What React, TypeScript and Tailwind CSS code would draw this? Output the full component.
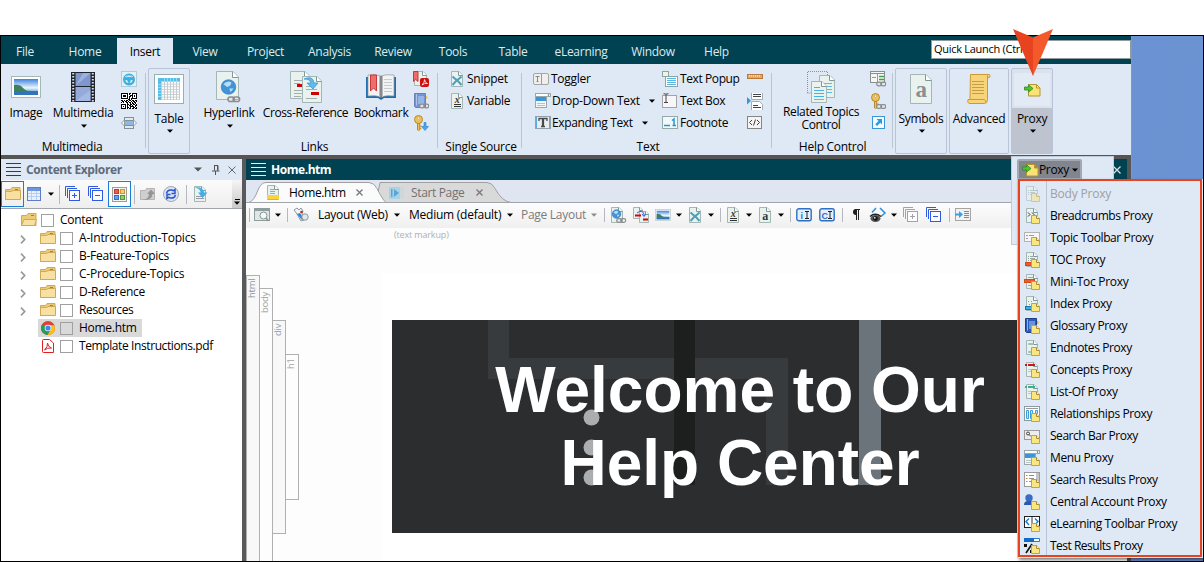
import React from "react";

type Kids = { children?: React.ReactNode };

const Svg = ({ w = 16, h = 16, c = "", vb, children }: Kids & { w?: number; h?: number; c?: string; vb?: string }) => (
  <svg width={w} height={h} viewBox={vb ?? `0 0 ${w} ${h}`} className={`shrink-0 ${c}`} fill="none">
    {children}
  </svg>
);

const Caret = ({ c = "", fill = "#000" }: { c?: string; fill?: string }) => (
  <Svg w={6} h={4} c={c}>
    <path d="M0 0.5h6L3 3.7z" fill={fill} />
  </Svg>
);

const Sep = ({ c = "" }: { c?: string }) => <div className={`shrink-0 w-px bg-[#b9c5d3] ${c}`} />;

const T = ({ children, c = "" }: Kids & { c?: string }) => (
  <span className={`block shrink-0 whitespace-nowrap text-[12px] leading-[16px] ${c}`}>{children}</span>
);

/* ---------- shared drawing parts ---------- */

const Page = ({ x = 0, y = 0, w = 12, h = 15, f = 4 }: { x?: number; y?: number; w?: number; h?: number; f?: number }) => (
  <g transform={`translate(${x} ${y})`}>
    <path d={`M.5 .5H${w - f}L${w - 0.5} ${f}V${h - 0.5}H.5z`} fill="#e9f2ef" stroke="#a3b8b4" />
    <path d={`M${w - f - 0.5} .5V${f + 0.5}H${w - 0.5}`} stroke="#7f9995" fill="#fff" />
  </g>
);

const Note = () => (
  <g>
    <path d="M7.5 7.5h5l3 3v5h-8z" fill="#fae681" stroke="#c2a53c" />
    <path d="M12.5 7.5v3h3" fill="#fff6c4" stroke="#a98d2c" />
  </g>
);

const Chain = ({ x, y }: { x: number; y: number }) => (
  <g transform={`translate(${x} ${y})`} stroke="#8b8d92" strokeWidth="1.2">
    <rect x=".7" y=".7" width="5" height="3.6" rx="1.8" fill="#e4e4e8" />
    <rect x="4.7" y=".7" width="5" height="3.6" rx="1.8" fill="none" />
  </g>
);

const Globe = ({ x, y, r }: { x: number; y: number; r: number }) => (
  <g>
    <circle cx={x} cy={y} r={r} fill="#4394d6" stroke="#2f74b4" strokeWidth=".6" />
    <path
      d={`M${x - r * 0.7} ${y - r * 0.4}q${r * 0.6} ${-r * 0.6} ${r * 1.1} ${-r * 0.2}q${-r * 0.1} ${r * 0.6} ${-r * 0.6} ${r * 0.6}z M${x + r * 0.1} ${y + r * 0.2}h${r * 0.6}l${-r * 0.4} ${r * 0.5}z`}
      fill="#b5defa"
    />
  </g>
);

const Scenery = ({ w, h }: { w: number; h: number }) => (
  <Svg w={w} h={h} vb="0 0 30 22">
    <defs>
      <linearGradient id="sky" x1="0" y1="0" x2="0" y2="1">
        <stop offset="0" stopColor="#3f83dc" />
        <stop offset=".55" stopColor="#eaf6ff" />
        <stop offset="1" stopColor="#2c6fb5" />
      </linearGradient>
    </defs>
    <rect x=".5" y=".5" width="29" height="21" fill="#fff" stroke="#a3bab6" />
    <rect x="3" y="3" width="24" height="16" fill="url(#sky)" />
    <path d="M3 9q6-1 9 3t9 2l-6 1H3z" fill="#3e7f5c" />
    <path d="M3 15h24v4H3z" fill="#2f75b8" />
  </Svg>
);

const KeyShape = () => (
  <g>
    <circle cx="5.5" cy="4.500" r="4" fill="#ecc05c" stroke="#b98a2c" />
    <circle cx="5.5" cy="3.2" r="1.2" fill="#fff6d8" stroke="#b98a2c" strokeWidth=".5" />
    <path d="M4.500 8.500h2.200V15l-1.100.8-1.100-.8z M6.700 11h1.800 M6.700 13.300h1.600" fill="#ecc05c" stroke="#b98a2c" />
  </g>
);

const Arrowlet = () => (
  <path d="M.5 3h4V.8L9 4.500 4.500 8.200V6h-4z" fill="#52c234" stroke="#2c8a1a" strokeWidth=".8" />
);

/* ---------- ribbon icons ---------- */

const FilmIcon = () => (
  <Svg w={24} h={30}>
    <rect width="24" height="30" fill="#20242c" />
    <rect x="4.500" y="1" width="15" height="13" fill="#7f97cf" />
    <rect x="4.500" y="15" width="15" height="14" fill="#93aadb" />
    <path d="M4.500 14L12 1h7.500zM4.500 29L19.500 18v11z" fill="#b3c3e6" opacity=".6" />
    {Array.from({ length: 10 }, (_, i) => (
      <g key={i} fill="#d9dee7">
        <rect x="1.200" y={1 + i * 3} width="2" height="1.500" />
        <rect x="20.800" y={1 + i * 3} width="2" height="1.500" />
      </g>
    ))}
  </Svg>
);

const WheelIcon = () => (
  <Svg>
    <rect x=".5" y=".5" width="15" height="15" fill="#e3f1f6" stroke="#b2ccd4" />
    <circle cx="8" cy="8.500" r="4.800" stroke="#3bb0e0" strokeWidth="2.400" />
    <path d="M3 7q5-2 10 0v2h-3l-1.500 3h-1L6 9H3z" fill="#3bb0e0" />
    <path d="M4 5.500q4-1.500 8 0" stroke="#d6eef8" strokeWidth=".8" />
  </Svg>
);

const QR = [
  "1111111011011111", "1000001010010001", "1011101001110101", "1011101011010101", "1000001010010001", "1111111010111111",
  "0000000110100000", "1101011011011011", "0110110100101101", "1010011011010110", "0000001001011010", "1111101101101101",
  "1000101011010011", "1010101001111010", "1000101101001101", "1111101011011011",
];
const QrIcon = () => (
  <Svg>
    <rect width="16" height="16" fill="#fff" />
    {QR.map((r, y) => r.split("").map((b, x) => (b === "1" ? <rect key={`${x}-${y}`} x={x} y={y} width="1" height="1" fill="#000" /> : null)))}
  </Svg>
);

const SlideIcon = () => (
  <Svg>
    <rect x="3.500" y="2.500" width="9" height="3" fill="#e2eaf0" stroke="#7f9297" />
    <rect x="3.500" y="10.500" width="9" height="3" fill="#e2eaf0" stroke="#7f9297" />
    <rect x="3" y="6" width="10" height="4" fill="#8fb7e6" />
    <path d="M3.500 5L.5 8l3 3z M12.500 5l3 3-3 3z" fill="#fff" stroke="#8aa09f" />
  </Svg>
);

const TableIcon = () => (
  <Svg w={30} h={30}>
    <rect x=".5" y=".5" width="29" height="29" fill="#fff" stroke="#9aafb0" />
    <path d="M4 4h22v22H4z" fill="#c3cccf" />
    <path d="M4 4h22v3H7v19H4z" fill="#4fc0ee" />
    {[0, 1, 2, 3, 4, 5, 6].map((r) =>
      [0, 1, 2, 3, 4, 5].map((k) => <rect key={`${r}-${k}`} x={8 + k * 3} y={8 + r * 2.6} width="2" height="1.700" fill="#fff" />)
    )}
    <path d="M10.500 4v3M13.500 4v3M16.500 4v3M19.500 4v3M22.500 4v3M4 10.500h3M4 13.500h3M4 16.500h3M4 19.500h3M4 22.500h3" stroke="#a8e0f7" strokeWidth=".8" />
  </Svg>
);

const HyperlinkIcon = () => (
  <Svg w={26} h={32}>
    <Page w={23} h={29} f={6} />
    <Globe x={12.5} y={16} r={7.3} />
    <g transform="translate(11 25) scale(1.300)"><Chain x={0} y={0} /></g>
  </Svg>
);

const CrossRefIcon = () => (
  <Svg w={32} h={32}>
    <Page w={20} h={28} f={5} />
    <path d="M4 9.500h9M4 12.500h6M4 19.500h9M4 22.500h9M4 25.500h7" stroke="#a2afae" />
    <rect x="7" y="13" width="9" height="3" fill="#c00" />
    <Page x={12} y={5} w={20} h={27} f={5} />
    <path d="M16 18.500h11M16 27.500h11M16 15.500h5" stroke="#a2afae" />
    <rect x="21" y="21" width="8" height="3" fill="#c00" />
    <path d="M14 8q9-4 10 4h4l-5 6-6-6h4q-1-4-7-4z" fill="#62baea" stroke="#3a92cc" strokeWidth=".7" />
  </Svg>
);

const BookIcon = () => (
  <Svg w={30} h={27}>
    <path d="M0 3h30v21H18l-3 2-3-2H0z" fill="#1f6fb2" />
    <path d="M2 1q8-1 13 1 5-2 13-1v21q-8-1-13 1-5-2-13-1z" fill="#f3f3f3" stroke="#8f9597" strokeWidth=".7" />
    <path d="M13 2h4v21h-4z" fill="#b8babb" />
    <path d="M15 2v21" stroke="#55595c" />
    <path d="M18 5.500h8M18 8.500h8M18 11.500h8M18 14.500h8M18 17.500h8" stroke="#c9cbcc" />
    <path d="M4.500 1h6v16l-3-3-3 3z" fill="#ef6d6d" stroke="#c43a3a" />
  </Svg>
);

const PdfMarkIcon = () => (
  <Svg>
    <Page x={1} w={13} h={15} />
    <path d="M.5.500h4.500v10L2.700 8.500.5 10.500z" fill="#f06a6a" stroke="#c43a3a" />
    <rect x="7" y="7" width="9" height="9" rx="2" fill="#cf1010" />
    <path d="M9 14q3-3 2.500-5.500Q12 12 14.500 12.500 11.500 12 9 14z" stroke="#fff" strokeWidth=".8" />
  </Svg>
);

const BlueBook = ({ faded = false }: { faded?: boolean }) => (
  <g opacity={faded ? 0.6 : 1}>
    <path d="M1.500.500h11v14h-10l-1-1z" fill="#2b5db8" stroke="#1c3f86" />
    <path d="M3.500 1v11.500" stroke="#8fb0e8" />
    <rect x="5" y="3" width="6" height="8" fill="#6a93dd" />
    <path d="M13 3h1.500v3H13z" fill="#f0b429" />
  </g>
);

const SnippetShape = () => (
  <g>
    <Page w={12} h={16} />
    <path d="M1.500 5.500L6 9.500 10.500 5.500M1.500 14L6 9l4.500 5" stroke="#4f9fb6" strokeWidth="2" />
  </g>
);

const PageGlyph = ({ g, italic, lines }: { g: string; italic?: boolean; lines?: boolean }) => (
  <Svg w={13} h={16}>
    <Page w={12} h={16} />
    <text x="6" y={lines ? 10 : 12.5} textAnchor="middle" fontFamily="Liberation Serif" fontWeight="bold" fontStyle={italic ? "italic" : "normal"} fontSize={lines ? 10 : 12} fill="#333">
      {g}
    </text>
    {lines && <path d="M3 11.500h7M3 13.500h7" stroke="#333" />}
  </Svg>
);

const TogglerIcon = () => (
  <Svg w={16} h={13}>
    <rect x=".5" y=".5" width="15" height="11" rx="1.500" fill="#f1eeee" stroke="#a5a5a5" />
    <path d="M8.500 1v10.500" stroke="#9b9b9b" />
    <path d="M2.500 3.500h4M4.500 3.500v5M3.500 8.500h2" stroke="#888" />
  </Svg>
);

const MenuBoxShape = () => (
  <g>
    <rect x=".5" y=".5" width="15" height="3" fill="#fff" stroke="#9aa7ad" />
    <rect x=".5" y="3.500" width="11" height="11" fill="#f3f6f6" stroke="#9aa7ad" />
    <rect x="1" y="4" width="10" height="4" fill="#3b96d8" />
    <path d="M2 10.500h8M2 12.500h8" stroke="#b9c3c3" />
    <path d="M12.500 1.500h2l-1 1.500z" fill="#444" />
  </g>
);

const ExpandIcon = () => (
  <Svg w={16} h={14}>
    <rect x=".5" y=".5" width="15" height="12" fill="#e8edf2" stroke="#8ea3ad" />
    <path d="M1.500 1v11M14.500 1v11" stroke="#5aa9e0" />
    <path d="M4 5V2.500h8V5M6 10.500h4" stroke="#4a4a4a" strokeWidth="1.300" />
    <path d="M8 2.500v8" stroke="#4a4a4a" strokeWidth="2.200" />
  </Svg>
);

const TextPopupIcon = () => (
  <Svg>
    <rect x=".5" y=".5" width="6" height="5" fill="#eef3f2" stroke="#8da6a2" />
    <rect x="3.500" y="5.500" width="12" height="10" fill="#fff" stroke="#8da6a2" />
    <path d="M5 7.500h9M5 9.500h9M5 11.500h9M5 13.500h9" stroke="#5bb8e4" />
  </Svg>
);

const TextBoxIcon = () => (
  <Svg>
    <rect x=".5" y="2.500" width="14" height="12" fill="#f7f6f8" stroke="#a3a3a8" />
    <path d="M1.500.800Q3.500.5 4 1.500 4.500.5 6.500.800M4 1.500V9M2 9.500h4" stroke="#444" />
  </Svg>
);

const FootnoteIcon = () => (
  <Svg w={16} h={14}>
    <rect x=".5" y=".5" width="15" height="12" fill="#f2f7f9" stroke="#93aaa6" />
    <path d="M2 9.500h6M10 4.500l2-1.500v7M10.500 9.500h3.500" stroke="#2196d8" strokeWidth="1.500" />
  </Svg>
);

const RulerIcon = () => (
  <Svg w={16} h={5}>
    <rect x=".5" y=".5" width="15" height="4" fill="#e8a860" stroke="#b87a3a" />
    <path d="M2.500 1v1.500M4.500 1v1.500M6.500 1v1.500M8.500 1v1.500M10.500 1v1.500M12.500 1v1.500" stroke="#fbe0bd" />
  </Svg>
);

const BreakIcon = () => (
  <Svg w={17} h={17}>
    <path d="M4.500 0V6.500h11V0M4.500 17V8.500h8l3 3v5.500" fill="#fff" stroke="#9fb0ad" />
    <path d="M6 1.500h8M6 3.500h8M6 12.500h5M6 14.500h8" stroke="#444" />
    <path d="M0 4l4 3.800-4 3.800z" fill="#3b96d8" />
  </Svg>
);

const CodeIcon = () => (
  <Svg>
    <rect x=".5" y="1.500" width="14" height="12" fill="#f4f4f4" stroke="#858585" />
    <path d="M5 5L2.500 7.500 5 10M10 5l2.500 2.500L10 10M8.500 4.500l-2 6" stroke="#444" />
  </Svg>
);

const TopicsIcon = () => (
  <Svg w={29} h={33}>
    <path d="M.5 22V.5h20V4M.5 22H4" stroke="#7f9693" strokeDasharray="1 1" />
    <Page x={12} y={4} w={16} h={23} f={5} />
    <path d="M15 12.500h10M15 15.500h10M15 18.500h10M15 21.500h10" stroke="#5bbce8" />
    <Page x={4} y={10} w={16} h={22} f={5} />
    <path d="M7 16.500h6M7 19.500h10M7 22.500h10M7 25.500h10" stroke="#41b3e5" />
    <path d="M7 28.500h10" stroke="#9aa9a7" />
  </Svg>
);

const ControlLinkIcon = () => (
  <Svg>
    <rect x=".5" y=".5" width="14" height="11" fill="#f5f7f5" stroke="#87908f" />
    <path d="M1 2.500h13" stroke="#87908f" />
    <path d="M2 6.500h4M7.500 3v8" stroke="#999" />
    <path d="M9 5.500h5M9 8.500h5" stroke="#39a34a" strokeWidth="1.500" />
    <Chain x={6} y={10.5} />
  </Svg>
);

const ShortcutIcon = () => (
  <Svg w={14} h={14}>
    <rect x=".5" y=".5" width="12" height="12" fill="#f4fafe" stroke="#3b96d8" />
    <path d="M4.500 3h5.500v5.500L8.300 6.700 5 10 3.300 8.300 6.500 4.900z" fill="#2b9be0" />
  </Svg>
);

const SymbolIcon = () => (
  <Svg w={22} h={30}>
    <Page w={22} h={30} f={6} />
    <text x="11" y="23" textAnchor="middle" fontFamily="Liberation Serif" fontWeight="bold" fontSize="23" fill="#8a8f90">a</text>
  </Svg>
);

const ScrollIcon = () => (
  <Svg w={24} h={30}>
    <path d="M3.500.500h19q1 1 0 3h-2v22q0 4-3 4H2q-2-1-1-4h2z" fill="#f7d478" stroke="#cb9a35" />
    <path d="M20.500 4V1.500M3 25.500h14.500q1 0 1 3" stroke="#cb9a35" />
    <path d="M5 7.500h12M5 10.500h12M5 13.500h12M5 16.500h12M5 19.500h12" stroke="#c49c4c" />
  </Svg>
);

const ProxyIcon = ({ c = "" }: { c?: string }) => (
  <Svg w={17} h={14} c={c}>
    <path d="M4.500 2.500v-1h8l3.500 3.500v8h-11.500z M12.500 1.500V5H16" fill="#fbe276" stroke="#b5962f" />
    <g transform="translate(0 1)"><Arrowlet /></g>
  </Svg>
);

/* ---------- menu icons ---------- */

const dots = (
  <path d="M4 4.500h1M6 4.500h3M4 6.500h1M6 6.500h5M4 8.500h1M6 8.500h3" stroke="#9aa9a7" />
);
const MENU: { label: string; t: string; off?: boolean; art: React.ReactNode }[] = [
  { label: "Body Proxy", t: "tracking-[-0.2px]", off: true, art: <><Page x={2} w={12} />{dots}</> },
  { label: "Breadcrumbs Proxy", t: "tracking-[-0.47px]", art: <><Page x={2} w={12} /><path d="M4 4.500l2 2-2 2M8 4.500l2 2-2 2" stroke="#333" /></> },
  { label: "Topic Toolbar Proxy", t: "tracking-[-0.4px]", art: <><rect x=".5" y="2.500" width="15" height="9" fill="#f6f6f8" stroke="#b3b3b8" /><path d="M2 5.500h2M5 5.500h5M2 8.500h2" stroke="#9b9ba0" /></> },
  { label: "TOC Proxy", t: "tracking-[-0.35px]", art: <><Page x={2} w={12} />{dots}<rect x="1.500" y="10.500" width="6" height="3" fill="#f05a28" stroke="#d9480f" /></> },
  { label: "Mini-Toc Proxy", t: "tracking-[-0.28px]", art: <><Page x={2} w={12} /><path d="M4 3.500h5M4 11.500h3" stroke="#9aa9a7" /><rect x=".5" y="5.500" width="10" height="3" fill="#f05a28" stroke="#d9480f" /></> },
  { label: "Index Proxy", t: "tracking-[-0.38px]", art: <><Page x={2} w={12} /><path d="M4 5.500h1M7 5.500h1M5 8.500h1M8 8.500h1" stroke="#8b9a9a" /><rect x="1.500" y="10.500" width="6" height="3" fill="#39b2e8" stroke="#1876ad" /></> },
  { label: "Glossary Proxy", t: "tracking-[-0.4px]", art: <BlueBook /> },
  { label: "Endnotes Proxy", t: "tracking-[-0.4px]", art: <><Page x={2} w={12} /><path d="M4.500 3.500h5v1h-5zM4.500 11.500h3v1h-3z" stroke="#9fc0b6" /></> },
  { label: "Concepts Proxy", t: "tracking-[-0.35px]", art: <><Page x={2} w={12} /><path d="M1 3h2M4 3h7" stroke="#c8171e" strokeWidth="2" /><path d="M4 7.500h5M4 9.500h3" stroke="#b9c6c3" /></> },
  { label: "List-Of Proxy", t: "tracking-[-0.28px]", art: <><Page x={2} w={12} /><path d="M1 3h2M4 3h7" stroke="#39b08a" strokeWidth="2" /><path d="M4 7.500h5M4 9.500h3" stroke="#b9c6c3" /></> },
  { label: "Relationships Proxy", t: "tracking-[-0.4px]", art: <><rect x=".5" y=".5" width="15" height="14" fill="#fff" stroke="#8b9aa0" /><path d="M2 2.500h12" stroke="#999" /><path d="M2.500 4.500h2v8h-2zM6.500 4.500h2v8h-2zM11.500 4.500h2v3h-2z" stroke="#3a9cd8" fill="#c9e8f8" /></> },
  { label: "Search Bar Proxy", t: "tracking-[-0.46px]", art: <><rect x=".5" y="2.500" width="15" height="9" fill="#ecebee" stroke="#99999e" /><circle cx="4" cy="5.500" r="1.500" stroke="#444" /><path d="M5 6.500l2 2" stroke="#444" /></> },
  { label: "Menu Proxy", t: "tracking-[-0.38px]", art: <MenuBoxShape /> },
  { label: "Search Results Proxy", t: "tracking-[-0.42px]", art: <><rect x=".5" y=".5" width="15" height="14" fill="#fff" stroke="#99999e" /><path d="M12 1h3v13h-3z" fill="#c4c4c8" /><path d="M2 3.500h1.500M2 6.500h1.500M2 9.500h1.500" stroke="#d07a2a" /><path d="M5 3.500h5M5 6.500h5M5 9.500h3" stroke="#8d8d8d" /></> },
  { label: "Central Account Proxy", t: "tracking-[-0.33px]", art: <><circle cx="5" cy="4" r="3.700" fill="#3a6cc6" /><path d="M0 11q0-4 4-4h3q3 0 3.500 4z" fill="#2b58b0" /></> },
  { label: "eLearning Toolbar Proxy", t: "tracking-[-0.41px]", art: <><rect x=".5" y=".5" width="15" height="11" fill="#fff" stroke="#222" /><path d="M5 2.500L2 5.500l3 3.500M11 2.500l3 3-3 3" stroke="#1f7fd0" strokeWidth="1.500" /><path d="M8 1v10" stroke="#333" /></> },
  { label: "Test Results Proxy", t: "tracking-[-0.5px]", art: <><path d="M.5.500h15v3H.5z" stroke="#1f7fd0" fill="#fff" /><path d="M0 0h10v4H0z" fill="#1569c7" /><path d="M8 6L2 15" stroke="#111" strokeWidth="1.600" /><path d="M0 6h3v3H0zM6 12h2v3H6z" fill="#111" /></> },
];

/* ---------- ribbon ---------- */

const TABS: [string, string][] = [
  ["File", "w-[48px]"], ["Home", "w-[68px] pl-[4px]"], ["Insert", "w-[56px]"], ["View", "w-[64px]"], ["Project", "w-[57px]"],
  ["Analysis", "w-[71px]"], ["Review", "w-[56px]"], ["Tools", "w-[64px]"], ["Table", "w-[56px]"], ["eLearning", "w-[80px]"],
  ["Window", "w-[64px]"], ["Help", "w-[63px]"],
];

const Big = ({ icon, label, caret, w }: { icon: React.ReactNode; label: React.ReactNode; caret?: boolean; w: string }) => (
  <div className={`flex shrink-0 flex-col items-center ${w}`}>
    <div className="flex h-[34px] items-center">{icon}</div>
    <T c="leading-[14px] text-center pt-[1px]">{label}</T>
    {caret && <Caret c="mt-[3px] ml-[2px]" />}
  </div>
);

const Small = ({ children, c = "" }: Kids & { c?: string }) => (
  <div className={`flex shrink-0 flex-col ${c}`}>
    {React.Children.map(children, (k) => (
      <div className="flex h-[22px] items-center">{k}</div>
    ))}
  </div>
);

const Group = ({ w, label, children, pl = "", shift = "" }: Kids & { w: string; label: string; pl?: string; shift?: string }) => (
  <div className={`flex h-[91px] shrink-0 flex-col ${w}`}>
    <div className={`flex h-[75px] pt-[6px] ${pl}`}>{children}</div>
    <div className={`flex justify-center ${shift}`}><T>{label}</T></div>
  </div>
);

const Boxed = ({ w, icon, label, hot }: { w: string; icon: React.ReactNode; label: string; hot?: boolean }) => (
  <div className={`mt-[4px] flex h-[86px] shrink-0 flex-col items-center rounded-[2px] border border-[#b9c4d6] pt-[4px] ${w} ${hot ? "bg-[linear-gradient(#dbe2ec_39px,#bdc3cf_39px)]" : ""}`}>
    <div className={`flex h-[33px] items-center justify-center ${hot ? "w-[36px] bg-[#e2eaf5]" : "pb-[2px]"}`}>{icon}</div>
    <T c="mt-[5px]">{label}</T>
    <Caret c="mt-[2px] ml-[2px]" />
  </div>
);

const Ribbon = () => (
  <div className="flex h-[91px] bg-[#dfe8f5]">
    <Group w="w-[144px]" label="Multimedia" shift="pr-[2px]">
      <Big w="w-[50px]" icon={<Scenery w={30} h={22} />} label="Image" />
      <Big w="w-[64px]" icon={<FilmIcon />} label="Multimedia" caret />
      <Small c="ml-[6px] -mt-[2px]"><WheelIcon /><QrIcon /><SlideIcon /></Small>
    </Group>
    <Sep c="mt-[9px] h-[75px]" />
    <Boxed w="w-[42px] ml-[2px]" icon={<TableIcon />} label="Table" />
    <Group w="w-[247px]" label="Links" pl="pl-[1px]" shift="pl-[2px]">
      <Big w="w-[76px]" icon={<HyperlinkIcon />} label="Hyperlink" caret />
      <Big w="w-[77px]" icon={<CrossRefIcon />} label={<span className="tracking-[-0.4px]">Cross-Reference</span>} />
      <Big w="w-[74px]" icon={<BookIcon />} label={<span className="tracking-[-0.35px]">Bookmark</span>} />
      <Small c="-mt-[2px] ml-[-5px]">
        <PdfMarkIcon />
        <Svg><BlueBook faded /><Chain x={6} y={10.5} /></Svg>
        <Svg><KeyShape /><path d="M11 7.500h2v4h2.500L12 15.500 8.500 11.500H11z" fill="#4aa6ee" stroke="#2b7fc8" strokeWidth=".6" /></Svg>
      </Small>
    </Group>
    <Sep c="mt-[9px] h-[75px]" />
    <Group w="w-[83px]" pl="pl-[13px]" label="Single Source" shift="pl-[3px]">
      <Small c="-mt-[2px]">
        <><Svg w={13}><SnippetShape /></Svg><T c="ml-[3px]">Snippet</T></>
        <><PageGlyph g="x" italic lines /><T c="ml-[3px]">Variable</T></>
      </Small>
    </Group>
    <Sep c="mt-[9px] h-[75px]" />
    <Group w="w-[249px]" pl="pl-[11px]" label="Text" shift="pl-[3px]">
      <Small c="-mt-[2px] w-[129px]">
        <><TogglerIcon /><T c="ml-[2px]">Toggler</T></>
        <><Svg c="ml-[2px]"><MenuBoxShape /></Svg><T c="ml-[1px] w-[97px]">Drop-Down Text</T><Caret /></>
        <><div className="ml-[2px]"><ExpandIcon /></div><T c="ml-[1px] w-[90px] tracking-[-0.35px]">Expanding Text</T><Caret /></>
      </Small>
      <Small c="-mt-[2px] w-[85px]">
        <><TextPopupIcon /><T c="ml-[2px] tracking-[-0.4px]">Text Popup</T></>
        <><TextBoxIcon /><T c="ml-[2px] tracking-[-0.4px]">Text Box</T></>
        <><FootnoteIcon /><T c="ml-[2px]">Footnote</T></>
      </Small>
      <Small c="-mt-[2px]"><div className="pb-[6px]"><RulerIcon /></div><BreakIcon /><CodeIcon /></Small>
    </Group>
    <Sep c="mt-[9px] h-[75px]" />
    <Group w="w-[120px]" label="Help Control" shift="pl-[1px]">
      <Big w="w-[98px]" icon={<TopicsIcon />} label={<span className="block leading-[13px] tracking-[-0.35px]">Related Topics<br />Control</span>} />
      <Small c="-mt-[2px]">
        <ControlLinkIcon />
        <Svg><KeyShape /><Chain x={6} y={11} /></Svg>
        <div className="pl-[2px]"><ShortcutIcon /></div>
      </Small>
    </Group>
    <Sep c="mt-[9px] h-[75px]" />
    <Boxed w="w-[52px] ml-[2px]" icon={<SymbolIcon />} label="Symbols" />
    <Boxed w="w-[60px] ml-[2px]" icon={<ScrollIcon />} label="Advanced" />
    <Boxed w="w-[42px] ml-[2px]" icon={<ProxyIcon />} label="Proxy" hot />
  </div>
);

/* ---------- content explorer ---------- */

const Lines = ({ stroke }: { stroke: string }) => (
  <Svg w={15} h={14}>
    <path d="M0 .5h15M0 4.500h15M0 8.500h15M0 12.500h15" stroke={stroke} />
  </Svg>
);

const Folder = ({ open }: { open?: boolean }) => (
  <Svg w={16} h={14}>
    <path d="M.5 12.500v-10h5l1.500-2h8v12z" fill="#ecca78" stroke="#cfa858" />
    <path d="M10 2.500h3" stroke="#3b96d8" />
    <path d={open ? "M.5 12.500L3 6.500h12.500l-2 6z" : "M.5 12.500v-8h6l1.500-1h7.500v9z"} fill="#f7e0a0" stroke="#cfa858" />
  </Svg>
);

const Stack = ({ sign, color }: { sign: "+" | "-"; color: string }) => (
  <Svg>
    <path d="M.5 10V.5H10M2.500 12V2.500H12" stroke={color} />
    <rect x="4.500" y="4.500" width="10" height="10" stroke={color} fill="#fafcff" />
    <path d={sign === "+" ? "M7 9.500h5M9.500 7v5" : "M7 9.500h5"} stroke={color} />
  </Svg>
);

const Box = () => <div className="h-[13px] w-[13px] shrink-0 border border-[#a0a0a0]" />;

const Chrome = () => (
  <Svg w={14} h={14}>
    <circle cx="7" cy="7" r="7" fill="#dd4433" />
    <path d="M7 7L1 3.400A7 7 0 0 0 6.500 14l3-5z" fill="#22a05a" />
    <path d="M7 7l2.700 1.800L6.600 14A7 7 0 0 0 13.300 4.200H8z" fill="#fbc116" />
    <circle cx="7" cy="7" r="3.300" fill="#fff" />
    <circle cx="7" cy="7" r="2.600" fill="#4286f5" />
  </Svg>
);

const FOLDERS: [string, string][] = [
  ["A-Introduction-Topics", "tracking-[-0.17px]"], ["B-Feature-Topics", "tracking-[-0.25px]"], ["C-Procedure-Topics", "tracking-[-0.22px]"],
  ["D-Reference", "tracking-[-0.28px]"], ["Resources", "tracking-[-0.35px]"],
];

const Explorer = () => (
  <div className="flex w-[241px] shrink-0 flex-col bg-white">
    <div className="flex h-[21px] items-center bg-[#dfe8f5] pl-[5px]">
      <Lines stroke="#3c3c3c" />
      <T c="ml-[5px] w-[168px] font-bold text-[#5f6b79] tracking-[-0.38px]">Content Explorer</T>
      <Svg w={8} h={5}><path d="M0 .5h8L4 4.500z" fill="#555" /></Svg>
      <Svg w={8} h={10} c="ml-[10px]"><path d="M2 .5h4v5M2.500 .5v5M0 6h7.500M3.500 6v4M5.500 .5v5" stroke="#555" /></Svg>
      <Svg w={8} h={8} c="ml-[8px]"><path d="M.5.500l7 7m0-7l-7 7" stroke="#666" /></Svg>
    </div>
    <div className="flex h-[29px] items-center border-b border-[#a0a5ab] bg-[linear-gradient(#fbfbfb,#eeeeee)]">
      <div className="flex h-[26px] w-[23px] items-center justify-center border border-[#1a7fd4]"><Folder /></div>
      <Svg w={14} h={14} c="ml-[3px]">
        <rect x=".5" y=".5" width="13" height="13" fill="#e9f1fd" stroke="#5d7dc8" />
        <rect x="1" y="1" width="12" height="3" fill="#6f95e0" />
        <path d="M1 6.500h12M1 9.500h12M4.500 4v9M9.500 4v9" stroke="#b9cdf0" />
      </Svg>
      <Caret c="ml-[7px]" />
      <div className="ml-[5px] h-[19px] w-px bg-[#b5b9be]" />
      <div className="ml-[5px]"><Stack sign="+" color="#2f5be0" /></div>
      <div className="ml-[7px]"><Stack sign="-" color="#2f5be0" /></div>
      <div className="ml-[4px] flex h-[26px] w-[23px] items-center justify-center border border-[#1a7fd4] bg-[#fdfdfd]">
        <Svg w={15} h={15}>
          <rect x=".5" y=".5" width="14" height="14" fill="#f3f3f3" stroke="#9d9d9d" />
          <rect x="2.500" y="2.500" width="4" height="4" fill="#e8604f" stroke="#c43a2b" />
          <rect x="8.500" y="2.500" width="4" height="4" fill="#f7cf6a" stroke="#d0972b" />
          <rect x="2.500" y="8.500" width="4" height="4" fill="#6f9fe6" stroke="#3a6cc6" />
          <rect x="8.500" y="8.500" width="4" height="4" fill="#8fd066" stroke="#559c30" />
        </Svg>
      </div>
      <div className="ml-[3px] h-[19px] w-px bg-[#b5b9be]" />
      <Svg w={16} h={14} c="ml-[5px]">
        <path d="M.5 12.500v-9h5l1-2h8v11z" fill="#cfcfcf" stroke="#b5b5b5" />
        <path d="M3 13q6-1 6-6H7l4-4.500L15 7h-2.500q0 6-9.500 6z" fill="#959595" />
      </Svg>
      <Svg c="ml-[7px]">
        <circle cx="8" cy="8" r="7.500" fill="#dbe4f7" stroke="#a0a6b3" />
        <path d="M3.500 7.500q1-4 5-3.500l2 .7 1.500-1.200v4H8.500M12.500 9q-1 3.500-5 3l-2-.6L4 12.500v-4h3.500" stroke="#2b55c8" strokeWidth="1.500" />
      </Svg>
      <div className="ml-[7px] h-[19px] w-px bg-[#b5b9be]" />
      <Svg c="ml-[6px]">
        <Page x={1} y={0} w={12} h={16} />
        <path d="M3 10.500h8M3 12.500h8" stroke="#99a" />
        <path d="M1.500 1.500q9-1 9.500 5h3.500l-5 5.500L5 6.500h2.500q0-4-6-5z" fill="#45aee8" />
      </Svg>
      <div className="ml-auto flex h-[28px] w-[10px] flex-col items-center justify-end bg-[linear-gradient(#f5f5f5,#c9c9c9)] pb-[3px]">
        <div className="mb-[1px] h-px w-[5px] bg-black" />
        <Caret />
      </div>
    </div>
    <div className="pt-[2px]">
      <div className="flex h-[18px] items-center pl-[20px]"><Folder open /><div className="ml-[4px]"><Box /></div><T c="ml-[6px]">Content</T></div>
      {FOLDERS.map(([n, t]) => (
        <div key={n} className="flex h-[18px] items-center pl-[19px]">
          <Svg w={6} h={9} c="mt-[2px]"><path d="M1 .7l3.700 3.800L1 8.300" stroke="#9a9a9a" strokeWidth="1.700" /></Svg>
          <div className="ml-[14px]"><Folder /></div>
          <div className="ml-[4px]"><Box /></div>
          <T c={`ml-[6px] ${t}`}>{n}</T>
        </div>
      ))}
      <div className="ml-[37px] flex h-[18px] w-[104px] items-center bg-[#d9d9d9] pl-[3px]">
        <Chrome /><div className="ml-[5px]"><Box /></div><T c="ml-[6px]">Home.htm</T>
      </div>
      <div className="flex h-[18px] items-center pl-[41px]">
        <Svg w={12} h={14}>
          <path d="M1.500.500h6l4 3.500v9.500h-10q-1 0-1-1v-11q0-1 1-1z" fill="#fff" stroke="#e02020" />
          <path d="M2.500 11q3.500-3 3-7 .5 4 4 5-4-.5-7 2z" stroke="#e02020" />
        </Svg>
        <div className="ml-[6px]"><Box /></div><T c="ml-[6px] tracking-[-0.4px]">Template Instructions.pdf</T>
      </div>
    </div>
  </div>
);

/* ---------- document ---------- */

const TSep = ({ c = "" }: { c?: string }) => <div className={`h-[14px] w-px shrink-0 bg-[#b5b9be] ${c}`} />;

const DocToolbar = () => (
  <div className="flex h-[25px] shrink-0 items-center overflow-hidden bg-[linear-gradient(#fcfcfc,#f0f0f0)] pb-[2px] pl-[3px]">
    <TSep />
    <Svg w={16} c="ml-[4px]">
      <rect x=".5" y="1.500" width="15" height="12" fill="#dfe6e6" stroke="#8d9c9c" />
      <rect x="1" y="2" width="14" height="2" fill="#8d9c9c" />
      <circle cx="9.500" cy="8.500" r="3.500" fill="#f4f7f7" stroke="#8a9494" />
      <path d="M12 11l2.500 3" stroke="#8a9494" strokeWidth="1.500" />
    </Svg>
    <Caret c="ml-[5px]" />
    <TSep c="ml-[6px]" />
    <Svg w={16} c="ml-[5px]">
      <path d="M1 3l3-2 2 2 2-2 2 3-1 3 2 6-3 1L4 7z" fill="#f3f5f7" stroke="#8a98a3" />
      <path d="M4 7l5 6 2-1-4-6z" fill="#2f86d0" />
      <circle cx="8.500" cy="5" r="1.300" fill="#d82020" />
      <circle cx="12" cy="10" r="3.200" fill="#dfe8ec" stroke="#8a98a3" />
    </Svg>
    <T c="ml-[9px] w-[76px]">Layout (Web)</T><Caret />
    <T c="ml-[9px] w-[98px] tracking-[-0.24px]">Medium (default)</T><Caret />
    <T c="ml-[8px] w-[70px] text-[#7c7c7c]">Page Layout</T><Caret fill="#8c8c8c" />
    <TSep c="ml-[7px]" />
    <Svg w={16} c="ml-[6px]"><Page w={12} h={16} /><Globe x={5.5} y={7} r={4.3} /><Chain x={5} y={11} /></Svg>
    <Svg w={17} c="ml-[6px]">
      <Page w={10} h={12} f={3} /><Page x={6} y={4} w={10} h={12} f={3} />
      <path d="M2 8.500h6M10 12.500h5" stroke="#d00" strokeWidth="2" /><path d="M4 6q5-4 7 1v2m-2-2l2 2.500 2-2.500" stroke="#2f5be0" />
    </Svg>
    <div className="ml-[5px]"><Scenery w={16} h={12} /></div><Caret c="ml-[5px]" />
    <Svg w={13} c="ml-[7px]"><SnippetShape /></Svg><Caret c="ml-[6px]" />
    <TSep c="ml-[6px]" />
    <div className="ml-[6px]"><PageGlyph g="x" italic lines /></div><Caret c="ml-[6px]" />
    <div className="ml-[7px]"><PageGlyph g="a" /></div><Caret c="ml-[6px]" />
    <TSep c="ml-[6px]" />
    {["i", "C"].map((g, i) => (
      <Svg key={g} w={16} h={14} c={i ? "ml-[7px]" : "ml-[5px]"}>
        <rect x=".8" y=".8" width="14.400" height="12" rx="2" fill="#e4effc" stroke="#2f6fc4" strokeWidth="1.400" />
        <text x="5.500" y="10.500" textAnchor="middle" fontFamily="Liberation Sans" fontWeight="bold" fontSize="9" fill="#2f6fc4">{g}</text>
        <path d="M9 3.500h4M11 3.500v7M9 10.500h4" stroke="#222" />
      </Svg>
    ))}
    <TSep c="ml-[7px]" />
    <Svg w={9} h={11} c="ml-[8px]"><path d="M9 .5H4M5.500 1v10M7.500 1v10" stroke="#222" /><path d="M5 0a3 3 0 0 0 0 6z" fill="#222" /></Svg>
    <Svg w={18} c="ml-[9px]">
      <path d="M7 1L3 5.500M11 1l5 5-4 3.500" stroke="#2b8fe0" strokeWidth="1.500" />
      <path d="M1 9.500q5-4.500 11 0" stroke="#222" strokeWidth="1.500" />
      <ellipse cx="6.500" cy="11.500" rx="5" ry="3.500" fill="#555" /><circle cx="6.500" cy="11.500" r="2.300" fill="#111" /><circle cx="5.800" cy="10.800" r=".9" fill="#eee" />
    </Svg>
    <Caret c="ml-[4px]" />
    <div className="ml-[6px]"><Stack sign="+" color="#a3a3a3" /></div>
    <div className="ml-[7px]"><Stack sign="-" color="#2f5be0" /></div>
    <TSep c="ml-[7px]" />
    <Svg w={16} h={13} c="ml-[5px]">
      <rect x=".5" y=".5" width="15" height="12" fill="#f2f2f2" stroke="#a5a5a5" />
      <path d="M9 3.500h5M9 5.500h5M9 7.500h5M9 9.500h5" stroke="#888" /><path d="M0 5.500h4V3l4 3.500L4 10V7.500H0z" fill="#3b9fe0" />
    </Svg>
  </div>
);

const TAGS: [string, string, string][] = [
  ["html", "mt-[47px] h-[300px] w-[14px]", "bg-[#f8f8f8] text-[#8d97a5]"],
  ["body", "mt-[60px] h-[300px] w-[13px]", "text-[#a5a5a5]"],
  ["div", "mt-[92px] h-[214px] w-[13px]", "bg-[#f8f8f8] text-[#8fa3bd]"],
  ["h1", "mt-[126px] h-[146px] w-[13px]", "text-[#a5a5a5]"],
];

const Document = () => (
  <div className="flex w-[881px] shrink-0 flex-col">
    <div className="flex h-[21px] shrink-0 items-center bg-[#004251] pl-[5px]">
      <Lines stroke="#e6eef0" />
      <T c="ml-[5px] font-bold text-white tracking-[-0.45px]">Home.htm</T>
      <Svg w={8} h={8} c="ml-auto mr-[6px]"><path d="M.5.500l7 7m0-7l-7 7" stroke="#d7e2e5" strokeWidth="1.300" /></Svg>
    </div>
    <div className="grid h-[23px] shrink-0 overflow-hidden border-b border-[#a0a5ab] bg-[#dfe6f1]">
      <svg width="270" height="23" className="col-start-1 row-start-1" fill="none">
        <path d="M134 2.500h107q5 0 8 6 7 13 16 14H138l-6-10z" fill="#d9d9d9" stroke="#a0a0a0" />
        <path d="M0 22.500h3Q8 21 12 10q3-7.500 8-7.500h103q5 0 8 6 6 12 9 14z" fill="#fbfbfb" stroke="#a0a0a0" />
        <path d="M4 22.500h134" stroke="#fbfbfb" />
      </svg>
      <div className="col-start-1 row-start-1 flex items-center pl-[21px] pt-[2px]">
        <Svg w={13}><Page w={12} h={15} /><path d="M3 4.500h4M3 6.500h5M3 8.500h5" stroke="#9aa" /><rect x="0" y="10" width="12" height="4" fill="#fbd33a" /></Svg>
        <T c="ml-[9px] w-[67px] tracking-[-0.4px]">Home.htm</T>
        <Svg w={7} h={7}><path d="M.5.500l6 6m0-6l-6 6" stroke="#777" strokeWidth="1.300" /></Svg>
        <Svg w={15} h={12} c="ml-[26px]"><rect width="15" height="12" fill="#a9d2e8" /><path d="M2 2h1.500v8H2zM5 2l5 4-5 4z" fill="#5ba6d0" /><rect x="11" width="4" height="12" fill="#cdd8dd" /></Svg>
        <T c="ml-[7px] w-[65px] text-[#717171] tracking-[-0.35px]">Start Page</T>
        <Svg w={7} h={7}><path d="M.5.500l6 6m0-6l-6 6" stroke="#777" strokeWidth="1.300" /></Svg>
      </div>
    </div>
    <DocToolbar />
    <div className="grid min-h-0 grow overflow-hidden bg-[#fdfdfd]">
      <div className="col-start-1 row-start-1 flex h-[333px] items-start overflow-hidden">
        {TAGS.map(([n, pos, c]) => (
          <div key={n} className={`shrink-0 border border-l-0 border-[#b0b0b0] first:border-l ${pos} ${c}`}>
            <span className="block h-full w-[9px] rotate-180 pb-[3px] text-right text-[9.5px] leading-[9px] [writing-mode:vertical-rl]">{n}</span>
          </div>
        ))}
        <div className="ml-[95px] mt-px text-[9px] leading-[12px] tracking-[-0.15px] text-[#b0b0b0]">(text markup)</div>
      </div>
      <div className="col-start-1 row-start-1 ml-[136px] mt-[45px] h-[288px] bg-white pl-[10px] pt-[47px]">
        <div className="grid h-[213px] w-[696px] bg-[#2c2d2f]">
          <svg width="696" height="213" className="col-start-1 row-start-1">
            <path d="M96 0h21v38h279v127h-22V59H96z" fill="#373b3e" />
            <rect x="282" width="21" height="165" fill="#1d1e1e" />
            <rect x="467" width="22" height="165" fill="#6c747b" />
            {[97.5, 127.5, 157.5].map((y) => <circle key={y} cx="199.500" cy={y} r="8" fill="#aaaeb1" />)}
          </svg>
          <h1 className="col-start-1 row-start-1 pt-[34px] text-center font-['Liberation_Sans',sans-serif] text-[64px] font-bold leading-[73px] tracking-normal text-white">
            Welcome to Our<br />Help Center
          </h1>
        </div>
      </div>
    </div>
  </div>
);

export default function App() {
  return (
    <div className="relative h-[562px] w-[1204px] overflow-hidden bg-white pt-[35px] font-['Open_Sans','Noto_Sans',sans-serif] tracking-[-0.28px] text-black">
      <div className="flex h-[527px] border border-black bg-[linear-gradient(100deg,#6288c5,#6c94d4)]">
        <div className="flex w-[1130px] shrink-0 flex-col bg-[#555]">
          <div className="flex h-[28px] items-end bg-[#004251]">
            {TABS.map(([n, w]) => (
              <div key={n} className={`flex h-[26px] shrink-0 items-center justify-center pt-[2px] ${w} ${n === "Insert" ? "bg-[#dfe8f5] text-black" : "text-[#dfe9ec]"}`}>
                <T>{n}</T>
              </div>
            ))}
            <div className="mb-[5px] ml-auto flex h-[19px] w-[200px] items-center border border-[#8e9ca0] bg-white pl-[2px] text-[11px]">
              <span className="whitespace-nowrap">Quick Launch (Ctrl+Q)</span>
            </div>
          </div>
          <Ribbon />
          <div className="h-[4px] shrink-0" />
          <div className="flex h-[402px]">
            <Explorer />
            <div className="w-[4px] shrink-0 bg-[#58595b]" />
            <Document />
          </div>
        </div>
        <div className="w-px bg-[#8bab3b]" />
      </div>

      <svg width="42" height="50" className="absolute left-[1012px] top-[27px]">
        <path d="M1 2l20 8.500V49z" fill="#e8431f" />
        <path d="M41 2l-20 8.500V49z" fill="#f4592b" />
      </svg>

      <div className="absolute left-[1011px] top-[156px] h-[89px] w-[103px] border border-[#c1cad8] bg-[#dfe8f5] pl-[5px] pt-[2px]">
        <div className="flex h-[21px] w-[65px] items-center rounded-[2px] border-2 border-[#a4a9b1] bg-[#80858e] pl-[3px]">
          <ProxyIcon />
          <T c="w-[33px] tracking-[-0.35px]">Proxy</T>
          <Caret />
        </div>
      </div>
      <div className="absolute left-[1017px] top-[179px] h-[379px] w-[186px] border-l border-[#b9c4d6] bg-[#dfe8f5] shadow-[2px_2px_3px_rgba(0,0,0,0.5)]">
        <div className="flex h-[378px] w-[184px] flex-col border-2 border-[#e8431f] bg-[linear-gradient(90deg,transparent_26px,#b9c5d6_26px,#b9c5d6_27px,transparent_27px)] pt-[2px]">
          {MENU.map((m) => (
            <div key={m.label} className={`flex h-[22px] shrink-0 items-center pl-[4px] ${m.off ? "text-[#a0a0a0]" : ""}`}>
              <Svg c={m.off ? "opacity-50" : ""}>{m.art}<Note /></Svg>
              <T c={`ml-[10px] ${m.t}`}>{m.label}</T>
            </div>
          ))}
        </div>
      </div>
    </div>
  );
}
